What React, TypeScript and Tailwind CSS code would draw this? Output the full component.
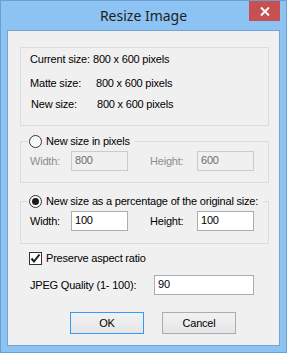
import React from "react";

const ui = "font-['Liberation_Sans',Arial,sans-serif] text-[11px] leading-[13px] tracking-[-0.2px] text-black";

function Radio({ checked }: { checked?: boolean }) {
  return (
    <span className="flex items-center justify-center w-[13px] h-[13px] rounded-full border border-[#333333] bg-gradient-to-b from-[#f4f4f4] to-[#ffffff]">
      {checked && <span className="w-[7px] h-[7px] rounded-full bg-[#1a1a1a]" />}
    </span>
  );
}

function TextBox({ value, disabled, w = "w-[57px]" }: { value: string; disabled?: boolean; w?: string }) {
  return (
    <div
      className={`${w} h-[20px] border pl-[3px] pt-[2px] ${
        disabled ? "border-[#cccccc] bg-[#f0f0f0] text-[#6d6d6d]" : "border-[#abadb3] bg-white text-black"
      }`}
    >
      {value}
    </div>
  );
}

function SizeRow({ w, h, disabled }: { w: string; h: string; disabled?: boolean }) {
  const label = disabled ? "text-[#8d8d8d]" : "text-black";
  return (
    <div className="flex items-center mt-[3px] pl-[9px]">
      <span className={`w-[41px] ${label}`}>Width:</span>
      <TextBox value={w} disabled={disabled} />
      <span className={`ml-[22px] w-[47px] ${label}`}>Height:</span>
      <TextBox value={h} disabled={disabled} />
    </div>
  );
}

function Group({ label, checked, children, className }: { label: string; checked?: boolean; children: React.ReactNode; className: string }) {
  return (
    <fieldset className={`ml-[12px] w-[249px] border border-[#dcdcdc] ${className}`}>
      <legend className="ml-[7px] pl-[1px] pr-[5px]">
        <span className="flex items-center h-[14px] gap-[4px]">
          <Radio checked={checked} />
          <span>{label}</span>
        </span>
      </legend>
      {children}
    </fieldset>
  );
}

export default function App() {
  return (
    <div className={`w-[287px] h-[353px] flex flex-col bg-[#8cc3f2] border border-[#6a9fd3] ${ui}`}>
      <div className="h-[29px] flex px-[6px]">
        <div className="w-[31px]" />
        <div className="flex-1 flex items-center justify-center font-['Noto_Sans',sans-serif] text-[14px] tracking-normal text-[#1e1e1e]">
          Resize Image
        </div>
        <div className="w-[31px] h-[20px] bg-[#c75050] flex items-center justify-center">
          <svg width="10" height="9" viewBox="0 0 10 9">
            <path d="M1 0.5 L9 8.5 M9 0.5 L1 8.5" stroke="white" strokeWidth="2" />
          </svg>
        </div>
      </div>

      <div className="flex-1 mx-[6px] mb-[6px] border border-[#72a5d6] bg-[#f0f0f0] flex flex-col">
        <div className="mt-[16px] ml-[12px] w-[249px] h-[79px] border border-[#dcdcdc] pl-[9px] pt-[5px]">
          <div className="flex">
            <span className="w-[63px] shrink-0">Current size:</span>
            <span>800 x 600 pixels</span>
          </div>
          <div className="flex mt-[11px]">
            <span className="w-[66px] shrink-0">Matte size:</span>
            <span>800 x 600 pixels</span>
          </div>
          <div className="flex mt-[8px] pl-[1px]">
            <span className="w-[66px] shrink-0">New size:</span>
            <span>800 x 600 pixels</span>
          </div>
        </div>

        <Group label="New size in pixels" className="mt-[8px] pb-[11px]">
          <SizeRow w="800" h="600" disabled />
        </Group>

        <Group label="New size as a percentage of the original size:" checked className="mt-[11px] pb-[12px]">
          <SizeRow w="100" h="100" />
        </Group>

        <div className="flex items-center gap-[4px] mt-[8px] pl-[21px] h-[13px]">
          <span className="w-[13px] h-[13px] border border-[#333333] bg-white flex items-center justify-center">
            <svg width="11" height="11" viewBox="0 0 11 11">
              <path d="M1.5 5.5 L4 8.5 L9.5 1.5" fill="none" stroke="#1a1a1a" strokeWidth="2" />
            </svg>
          </span>
          <span>Preserve aspect ratio</span>
        </div>

        <div className="flex items-center mt-[10px] pl-[22px]">
          <span className="w-[124px]">JPEG Quality (1- 100):</span>
          <TextBox value="90" w="w-[100px]" />
        </div>

        <div className="flex mt-[17px] pl-[62px]">
          <button className="w-[74px] h-[22px] border border-[#3399ff] bg-gradient-to-b from-[#f2f2f2] to-[#e6e6e6] flex items-center justify-center">
            OK
          </button>
          <button className="ml-[18px] w-[74px] h-[22px] border border-[#acacac] bg-gradient-to-b from-[#f2f2f2] to-[#e6e6e6] flex items-center justify-center">
            Cancel
          </button>
        </div>
      </div>
    </div>
  );
}
